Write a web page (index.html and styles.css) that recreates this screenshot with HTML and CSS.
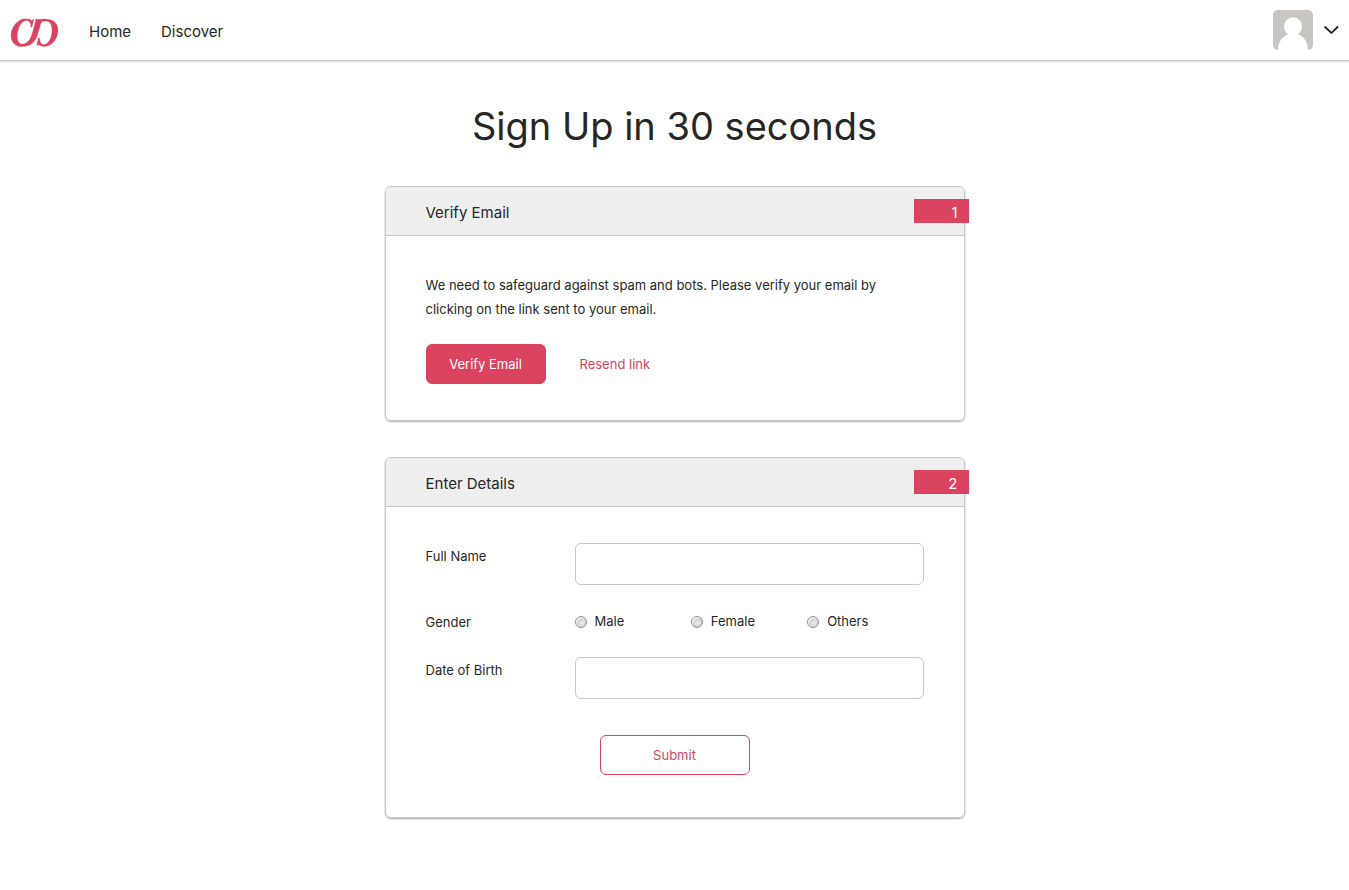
FILE: index.html
```html
<!DOCTYPE html>
<html lang="en">
<head>
<meta charset="utf-8">
<meta name="viewport" content="width=device-width, initial-scale=1">
<title>Sign Up</title>
<link rel="stylesheet" href="styles.css">
</head>
<body>
<header class="topbar">
  <a class="logo" href="#" aria-label="Homepage">
    <svg width="50" height="32" viewBox="0 0 50 32" aria-hidden="true">
      <path fill="#da4460" stroke="#da4460" stroke-width=".3" d="M23.800 3.200 L21.900 11.300 L20.900 11.100 C20.900 7 19.400 4.600 16.600 4.600 C11.600 4.600 7.300 12 7.300 20.200 C7.300 25 9 28 12.400 28 C17.800 28 20.600 23.600 22.800 15.600 L25.800 4.400 L24.900 3.200 L31.500 3.200 C41.500 2.200 48 6.200 48 14 C48 23.400 41.600 30.400 34.200 30.400 C31.600 30.400 29.600 29.600 28.400 28.600 L26.800 29.400 L28.400 21.800 L29.600 22 C29.600 26 31.200 28.600 34 28.600 C38.800 28.600 42 21.600 42 13.600 C42 7.800 39.600 4.800 35 5 C31.600 5.200 31 6.600 30.200 9.600 L27.600 18.600 C25 27 19.400 30.600 12.400 30.600 C5.600 30.600 1 26.400 1 19.400 C1 10.600 8.200 2.800 16 2.800 C18.800 2.800 20.800 3.600 21.900 4.800 Z"/>
    </svg>
  </a>
  <nav class="nav">
    <a href="#">Home</a>
    <a href="#">Discover</a>
  </nav>
  <button class="account" type="button" aria-label="Account menu">
    <svg class="avatar" width="40" height="40" viewBox="0 0 40 40" aria-hidden="true">
      <rect width="40" height="40" fill="#c9c5c0"/>
      <path fill="#fff" d="M20 7.300a9 9 0 0 1 9 9c0 3.400-1.500 6.200-4 7.900C31.500 26.500 34.700 32.500 35 40H5c.3-7.500 3.500-13.500 10-15.800-2.500-1.700-4-4.500-4-7.900a9 9 0 0 1 9-9z"/>
    </svg>
    <svg width="16" height="10" viewBox="0 0 16 10" aria-hidden="true">
      <path d="M1.500 1.500L8.500 8l6.500-6.500" fill="none" stroke="#262626" stroke-width="1.800"/>
    </svg>
  </button>
</header>
<main class="page">
  <h1 class="title">Sign Up in 30 seconds</h1>
  <section class="card">
    <div class="card-head">
      <h2>Verify Email</h2>
      <span class="step">1</span>
    </div>
    <div class="card-body">
      <p class="note">We need to safeguard against spam and bots. Please verify your email by clicking on the link sent to your email.</p>
      <div class="actions">
        <button class="btn primary" type="button">Verify Email</button>
        <a class="resend" href="#">Resend link</a>
      </div>
    </div>
  </section>
  <section class="card">
    <div class="card-head">
      <h2>Enter Details</h2>
      <span class="step">2</span>
    </div>
    <form class="card-body details">
      <div class="row">
        <label class="label" for="name">Full Name</label>
        <input class="field" id="name" type="text">
      </div>
      <div class="row" role="radiogroup" aria-labelledby="gender">
        <span class="label" id="gender">Gender</span>
        <div class="options">
          <label><input type="radio" name="gender">Male</label>
          <label><input type="radio" name="gender">Female</label>
          <label><input type="radio" name="gender">Others</label>
        </div>
      </div>
      <div class="row">
        <label class="label" for="dob">Date of Birth</label>
        <input class="field" id="dob" type="text">
      </div>
      <button class="btn outline" type="submit">Submit</button>
    </form>
  </section>
</main>
</body>
</html>
```
FILE: styles.css
```css
* { box-sizing: border-box; }

body {
  margin: 0;
  background: #fff;
  color: #262626;
  font: 13px/24px Inter, "Noto Sans", sans-serif;
}

a { color: inherit; text-decoration: none; }
button, input { font: inherit; }

.topbar {
  display: flex;
  align-items: center;
  height: 61px;
  padding: 0 10px;
  border-bottom: 1px solid #c8c8c8;
  box-shadow: 0 1px 1px #ddd;
}

.logo { display: flex; padding-top: 4px; }

.nav {
  display: flex;
  gap: 30px;
  margin-left: 29px;
  padding-top: 3px;
  font-size: 15px;
}

.account {
  display: flex;
  align-items: center;
  gap: 10px;
  margin-left: auto;
  padding: 0;
  border: 0;
  background: none;
}

.avatar { border-radius: 5px; }

.page {
  max-width: 580px;
  margin: 0 auto;
  padding-bottom: 36px;
}

.title {
  margin: 40px 0 35px;
  font-size: 38px;
  font-weight: 400;
  line-height: 50px;
  text-align: center;
}

.card {
  margin-bottom: 36px;
  border: 1px solid #c8c8c8;
  border-radius: 6px;
  box-shadow: 0 1px 2px #aaa;
}

.card-head {
  display: flex;
  align-items: center;
  justify-content: space-between;
  height: 49px;
  padding-left: 40px;
  border-bottom: 1px solid #c8c8c8;
  border-radius: 5px 5px 0 0;
  background: #efefef;
}

.card-head h2 {
  margin: 0;
  padding-top: 4px;
  font-size: 15px;
  font-weight: 400;
}

.step {
  width: 55px;
  height: 24px;
  margin-right: -5px;
  padding: 2px 11px 0;
  background: #da4460;
  color: #fff;
  font-size: 15px;
  text-align: right;
}

.card-body { padding: 37px 40px 36px; }

.note { margin: 0 0 23px; }

.actions { display: flex; align-items: center; gap: 34px; }

.btn {
  height: 40px;
  padding-top: 1px;
  border: 1px solid #da4460;
  border-radius: 6px;
}

.primary { width: 120px; background: #da4460; color: #fff; }

.resend { color: #da4460; }

.details { padding: 36px 40px 42px; }

.row {
  display: grid;
  grid-template-columns: 149px 1fr;
  align-items: start;
  margin-bottom: 24px;
}

.row + .row { margin-top: -1px; }

.row:first-child { margin-bottom: 25px; }

.label { padding-top: 1px; }

.field {
  width: 100%;
  height: 42px;
  padding: 0 12px;
  border: 1px solid #c8c8c8;
  border-radius: 6px;
  background: #fff;
}

.options { display: grid; grid-template-columns: repeat(3, 1fr); }

.options label { display: flex; align-items: center; gap: 8px; }

.options input {
  appearance: none;
  width: 12px;
  height: 12px;
  margin: 2px 0 0;
  border: 1px solid #8e8f8f;
  border-radius: 50%;
  background: radial-gradient(circle at 60% 60%, #f0f0f0 0, #cbcfd5 50%, #f4f4f4 58%);
}

.options input:checked { background: radial-gradient(circle, #262626 0 3px, #f4f4f4 4px); }

.outline {
  display: block;
  width: 150px;
  margin: 36px auto 0;
  background: #fff;
  color: #da4460;
}
```
